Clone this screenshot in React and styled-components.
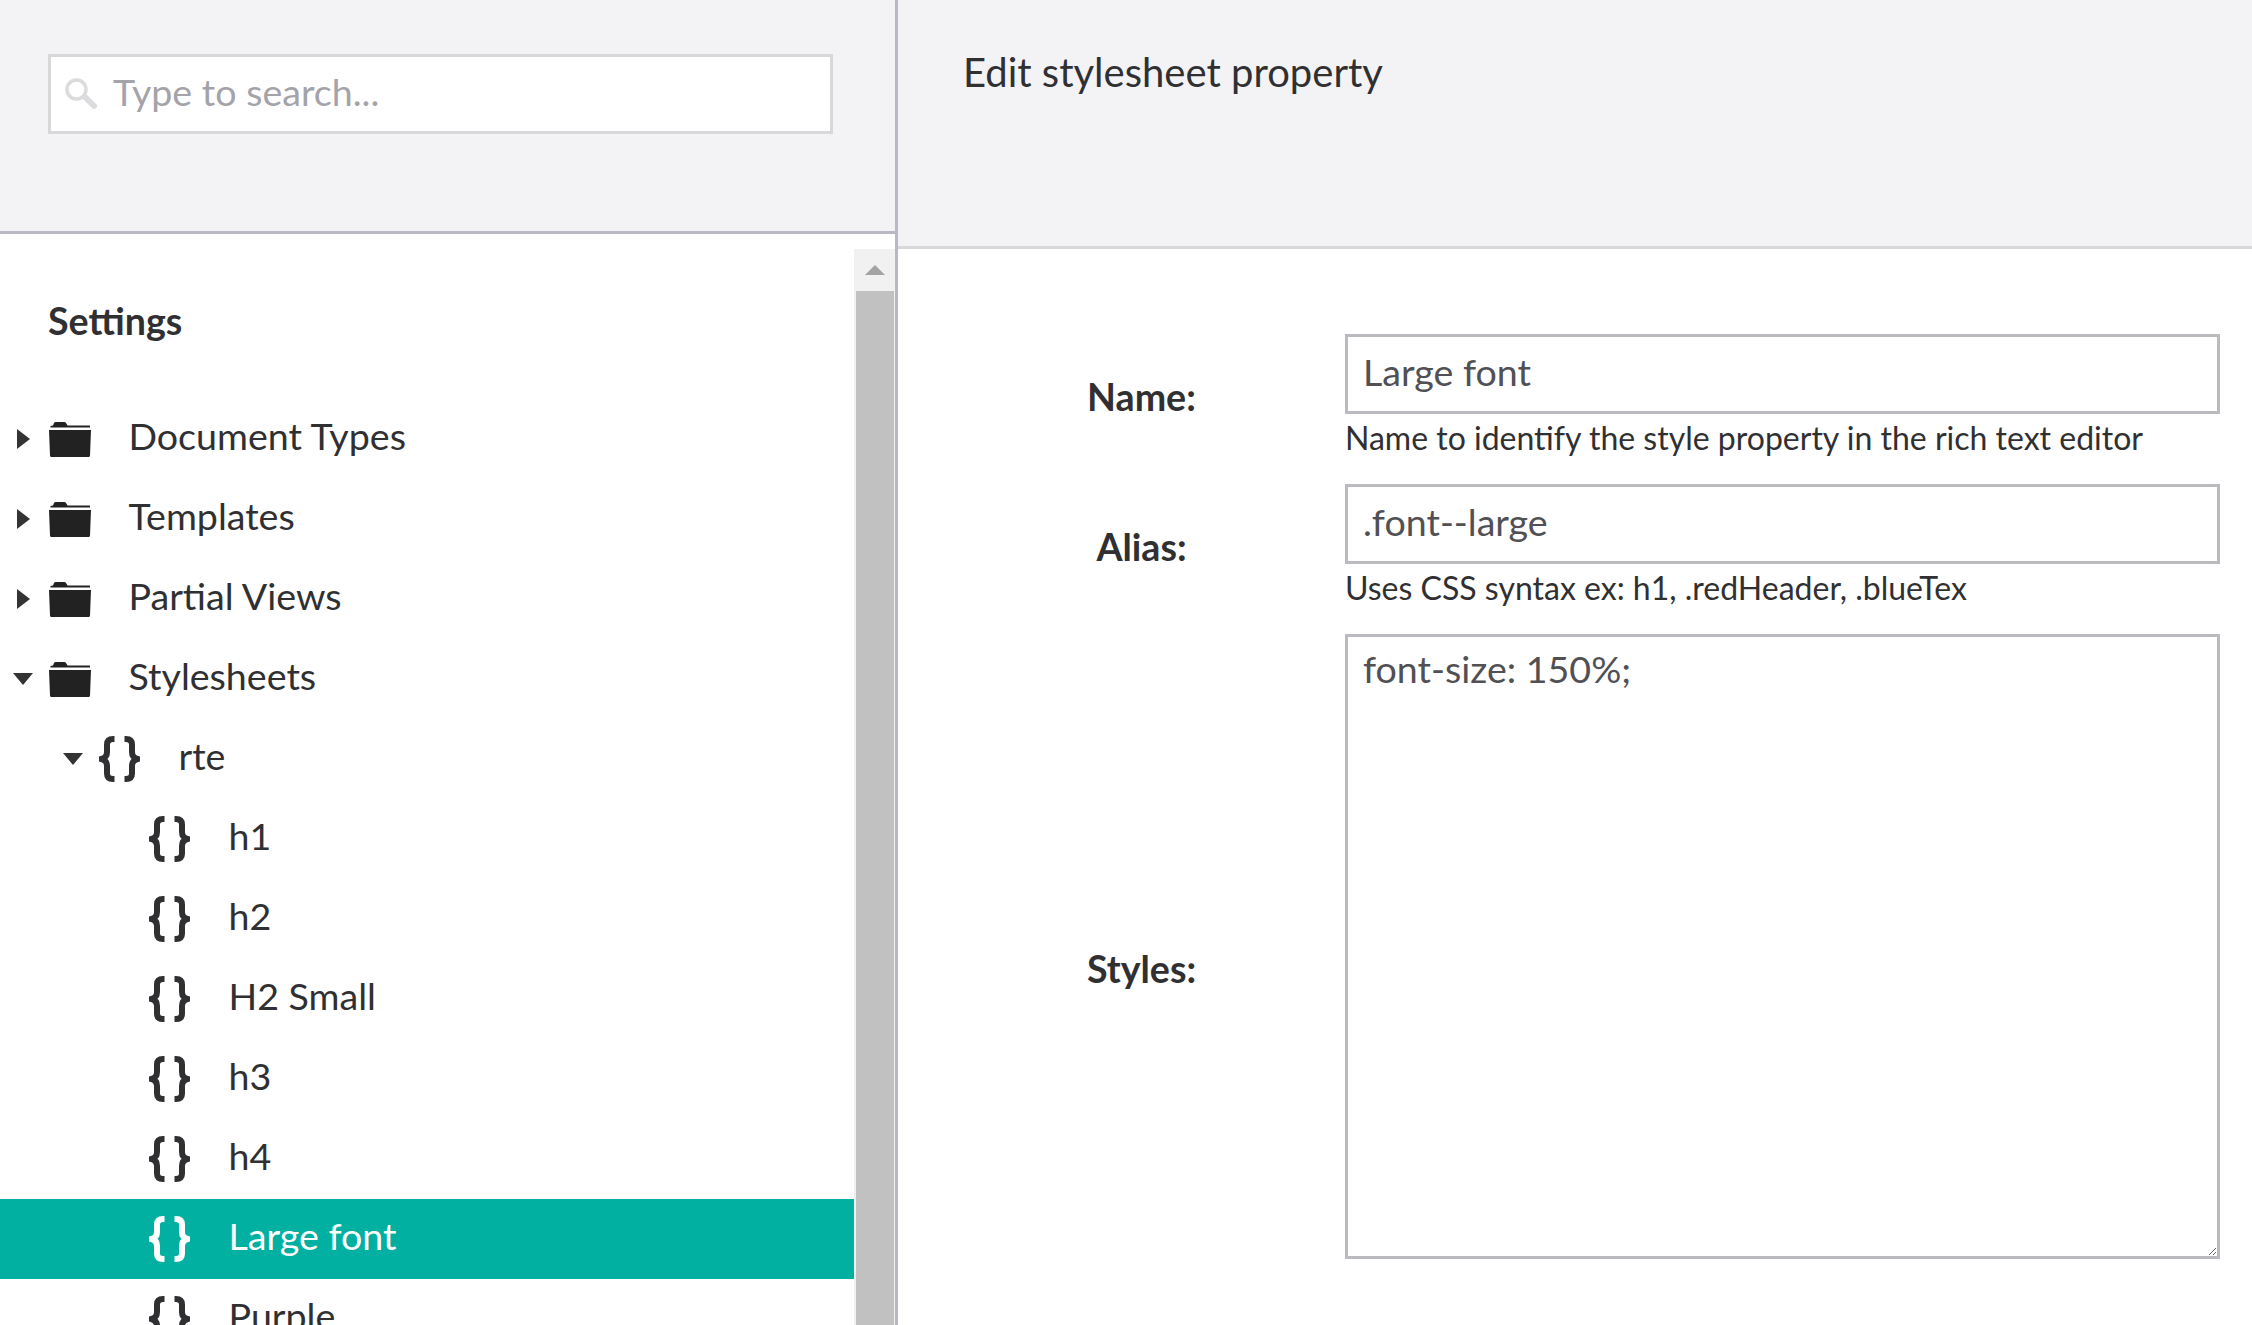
import React from "react";
import styled, { createGlobalStyle } from "styled-components";

const GlobalStyle = createGlobalStyle`
  html, body {
    margin: 0;
    height: 100%;
    background: #fff;
    overflow: hidden;
  }
  * {
    box-sizing: border-box;
  }
  body {
    font-family: Lato, "Liberation Sans", sans-serif;
    color: #303033;
  }
`;

const Page = styled.div`
  display: grid;
  grid-template-columns: 898px 1fr;
  height: 100vh;
  overflow: hidden;
`;

const LeftPanel = styled.aside`
  display: flex;
  flex-direction: column;
  border-right: 3px solid #b9b8c3;
  min-height: 0;
`;

const SearchHeader = styled.div`
  height: 234px;
  flex: none;
  padding: 54px 62px 0 48px;
  background: #f3f3f5;
  border-bottom: 3px solid #b9b8c3;
`;

const SearchBox = styled.div`
  position: relative;
  height: 80px;
`;

const SearchInput = styled.input`
  width: 100%;
  height: 100%;
  padding: 0 0 6px 62px;
  border: 3px solid #d8d7d9;
  border-radius: 0;
  outline: none;
  background: #fff;
  font: 400 37.6px Lato, sans-serif;
  color: #515054;

  &::placeholder {
    color: #a4a3a9;
    opacity: 1;
  }
`;

const SearchIcon = styled.svg`
  position: absolute;
  left: 17px;
  top: 23px;
  width: 34px;
  height: 34px;
`;

const TreeArea = styled.div`
  display: flex;
  flex: 1;
  min-height: 0;
`;

const Tree = styled.div`
  flex: none;
  width: 854px;
`;

const SectionTitle = styled.h2`
  margin: 0;
  height: 165px;
  padding: 63px 0 0 48px;
  font-size: 37.6px;
  line-height: 48px;
  font-weight: 700;
  color: #303033;
`;

const TreeRow = styled.div`
  display: flex;
  align-items: center;
  height: 80px;
  padding: 0 0 8px ${(p) => p.$depth * 50}px;
  background: ${(p) => (p.$active ? "#02b0a2" : "transparent")};
  color: ${(p) => (p.$active ? "#fff" : "#303033")};
  font-size: 37.6px;
`;

const CaretSlot = styled.span`
  display: flex;
  justify-content: center;
  align-items: center;
  flex: none;
  width: 46px;
  margin-right: 3px;
`;

const Caret = styled.span`
  width: 0;
  height: 0;
  margin-top: 8px;
  border-style: solid;
  border-color: transparent;
  ${(p) =>
    p.$open
      ? `border-width: 12px 10px 0 10px; border-top-color: #333;`
      : `border-width: 10px 0 10px 13px; border-left-color: #333;`}
`;

const IconSlot = styled.span`
  display: flex;
  align-items: center;
  flex: none;
  width: 79.5px;
`;

const FolderSvg = styled.svg`
  width: 42px;
  height: 35px;
  margin-top: 9px;
  fill: #222;
`;

const BracesSvg = styled.svg`
  width: 41px;
  height: 46px;
  margin-top: 7px;
  fill: none;
  stroke: currentColor;
  stroke-width: 6;
`;

const Scrollbar = styled.div`
  display: flex;
  flex-direction: column;
  flex: none;
  width: 41px;
  margin-top: 15px;
  padding: 0 1px 0 2px;
  background: #f1f1f1;
`;

const ScrollUp = styled.div`
  display: flex;
  justify-content: center;
  align-items: center;
  flex: none;
  height: 42px;
  padding-bottom: 1px;

  &::before {
    content: "";
    border-style: solid;
    border-width: 0 10px 10px 10px;
    border-color: transparent transparent #a3a3a3 transparent;
  }
`;

const ScrollThumb = styled.div`
  flex: 1;
  background: #c1c1c1;
`;

const RightPanel = styled.main`
  display: flex;
  flex-direction: column;
  min-width: 0;
`;

const EditorHeader = styled.header`
  height: 249px;
  flex: none;
  padding: 48px 0 0 65px;
  background: #f3f3f5;
  border-bottom: 3px solid #d8d7d9;
`;

const EditorTitle = styled.h1`
  margin: 0;
  font-size: 40px;
  line-height: 48px;
  font-weight: 400;
  color: #303033;
`;

const Form = styled.form`
  display: flex;
  flex-direction: column;
  gap: 24px;
  padding: 85px 32px 0 38px;
`;

const FormRow = styled.div`
  display: grid;
  grid-template-columns: 409px 1fr;
  align-items: center;
`;

const FieldLabel = styled.label`
  padding: 0 0 2px 2px;
  font-size: 37.6px;
  font-weight: 700;
  text-align: center;
  color: #303033;
`;

const TextInput = styled.input`
  display: block;
  width: 100%;
  height: 80px;
  padding: 0 15px 6px;
  border: 3px solid #bbbabf;
  border-radius: 0;
  outline: none;
  background: #fff;
  font: 400 37.6px Lato, sans-serif;
  color: #515054;
`;

const Hint = styled.div`
  height: 46px;
  font-size: 32px;
  line-height: 48px;
  color: #303033;
`;

const TextArea = styled.textarea`
  display: block;
  width: 100%;
  height: 625px;
  margin-bottom: 45px;
  padding: 9px 15px;
  border: 3px solid #bbbabf;
  border-radius: 0;
  outline: none;
  background: #fff;
  font: 400 37.6px/46px Lato, sans-serif;
  color: #515054;
`;

const Folder = () => (
  <FolderSvg viewBox="0 0 42 35">
    <path d="M1.5 5.5V4Q2 3.5 4 3.5L5 1Q5.5 0 7 0H15Q16.5 0 17 1L18.5 3.5H41V5.5Z" />
    <path d="M0 8H42L41 33.5Q41 35 39.5 35H2.5Q1 35 1 33.5Z" />
  </FolderSvg>
);

const Braces = () => (
  <BracesSvg viewBox="0 0 41 46">
    <path d="M15.500 3H14Q8 3 8 8.500V16Q8 21.500 2.500 23Q8 24.500 8 30V37.500Q8 43 14 43H15.500" />
    <path d="M25.500 3H27Q33 3 33 8.500V16Q33 21.500 38.500 23Q33 24.500 33 30V37.500Q33 43 27 43H25.500" />
  </BracesSvg>
);

const rows = [
  { label: "Document Types", depth: 0, icon: "folder", caret: "closed" },
  { label: "Templates", depth: 0, icon: "folder", caret: "closed" },
  { label: "Partial Views", depth: 0, icon: "folder", caret: "closed" },
  { label: "Stylesheets", depth: 0, icon: "folder", caret: "open" },
  { label: "rte", depth: 1, icon: "braces", caret: "open" },
  { label: "h1", depth: 2, icon: "braces" },
  { label: "h2", depth: 2, icon: "braces" },
  { label: "H2 Small", depth: 2, icon: "braces" },
  { label: "h3", depth: 2, icon: "braces" },
  { label: "h4", depth: 2, icon: "braces" },
  { label: "Large font", depth: 2, icon: "braces", active: true },
  { label: "Purple", depth: 2, icon: "braces" },
];

const App = () => {
  return (
    <>
      <GlobalStyle />
      <Page>
        <LeftPanel>
          <SearchHeader>
            <SearchBox>
              <SearchIcon viewBox="0 0 34 34" fill="none" stroke="#dcdbdd">
                <circle cx="11.500" cy="12.500" r="9.500" strokeWidth="3.500" />
                <path d="M20 20L29 29" strokeWidth="6" strokeLinecap="round" />
              </SearchIcon>
              <SearchInput placeholder="Type to search..." />
            </SearchBox>
          </SearchHeader>
          <TreeArea>
            <Tree>
              <SectionTitle>Settings</SectionTitle>
              {rows.map((row) => (
                <TreeRow key={row.label} $depth={row.depth} $active={row.active}>
                  <CaretSlot>
                    {row.caret && <Caret $open={row.caret === "open"} />}
                  </CaretSlot>
                  <IconSlot>
                    {row.icon === "folder" ? <Folder /> : <Braces />}
                  </IconSlot>
                  {row.label}
                </TreeRow>
              ))}
            </Tree>
            <Scrollbar>
              <ScrollUp />
              <ScrollThumb />
            </Scrollbar>
          </TreeArea>
        </LeftPanel>
        <RightPanel>
          <EditorHeader>
            <EditorTitle>Edit stylesheet property</EditorTitle>
          </EditorHeader>
          <Form>
            <FormRow>
              <FieldLabel>Name:</FieldLabel>
              <div>
                <TextInput defaultValue="Large font" />
                <Hint>Name to identify the style property in the rich text editor</Hint>
              </div>
            </FormRow>
            <FormRow>
              <FieldLabel>Alias:</FieldLabel>
              <div>
                <TextInput defaultValue=".font--large" />
                <Hint>Uses CSS syntax ex: h1, .redHeader, .blueTex</Hint>
              </div>
            </FormRow>
            <FormRow>
              <FieldLabel>Styles:</FieldLabel>
              <div>
                <TextArea defaultValue="font-size: 150%;" />
              </div>
            </FormRow>
          </Form>
        </RightPanel>
      </Page>
    </>
  );
};

export default App;
